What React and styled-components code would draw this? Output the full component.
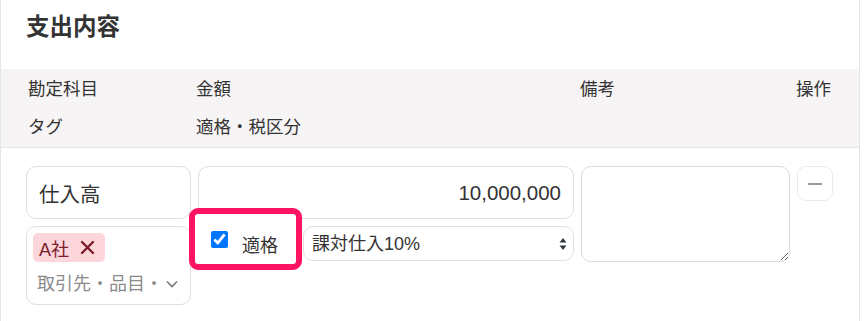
import React from 'react';
import styled, { createGlobalStyle } from 'styled-components';

const GlobalStyle = createGlobalStyle`
    body {
        margin: 0;
        background: #fff;
        color: #333;
        font-family: 'Liberation Sans', 'Noto Sans CJK JP', sans-serif;
    }
`;

const App = () => {
    return (
        <>
            <GlobalStyle />
            <Card>
                <Title>支出内容</Title>

                <HeaderBand>
                    <HeadCell>勘定科目</HeadCell>
                    <HeadCell>金額</HeadCell>
                    <HeadCell>備考</HeadCell>
                    <HeadCell>操作</HeadCell>
                    <HeadCell>タグ</HeadCell>
                    <HeadCell>適格・税区分</HeadCell>
                </HeaderBand>

                <Row>
                    <Stack>
                        <TextInput defaultValue='仕入高' />
                        <TagBox>
                            <Tag>
                                A社
                                <svg width='15' height='15' viewBox='0 0 15 15'>
                                    <path
                                        d='M2 2 L13 13 M13 2 L2 13'
                                        stroke='#7b1f2d'
                                        strokeWidth='2.4'
                                        strokeLinecap='round'
                                    />
                                </svg>
                            </Tag>
                            <Placeholder>
                                <span>取引先・品目・</span>
                                <svg width='12' height='8' viewBox='0 0 12 8'>
                                    <path
                                        d='M1 1.5 L6 6.5 L11 1.5'
                                        fill='none'
                                        stroke='#777'
                                        strokeWidth='1.6'
                                    />
                                </svg>
                            </Placeholder>
                        </TagBox>
                    </Stack>

                    <Stack>
                        <TextInput defaultValue='10,000,000' align='right' numeric />
                        <InlineRow>
                            <CheckLabel highlighted>
                                <input type='checkbox' defaultChecked />
                                <span>適格</span>
                            </CheckLabel>
                            <SelectWrap>
                                <Select defaultValue='10'>
                                    <option value='10'>課対仕入10%</option>
                                    <option value='8'>課対仕入8%</option>
                                </Select>
                                <svg width='8' height='14' viewBox='0 0 8 14'>
                                    <path d='M4 1 L7.5 5.5 H0.5 Z' fill='#343a40' />
                                    <path d='M4 13 L7.5 8.5 H0.5 Z' fill='#343a40' />
                                </svg>
                            </SelectWrap>
                        </InlineRow>
                    </Stack>

                    <Memo />

                    <MinusButton aria-label='削除'>
                        <span />
                    </MinusButton>
                </Row>
            </Card>
        </>
    );
};

export default App;

const Card = styled.div`
    width: 860px;
    min-height: 321px;
    box-sizing: border-box;
    border-left: 1px solid #e6e6e6;
    border-right: 1px solid #e6e6e6;
    background: #fff;
`;

const Title = styled.h2`
    margin: 0;
    height: 69px;
    box-sizing: border-box;
    padding: 9px 0 0 25px;
    font-family: 'Noto Sans CJK JP', sans-serif;
    font-size: 23.5px;
    font-weight: 700;
    line-height: 32px;
    color: #333;
`;

const HeaderBand = styled.div`
    display: grid;
    grid-template-columns: 168px 384px 216px 1fr;
    grid-auto-rows: 26px;
    row-gap: 12px;
    padding: 6px 0 8px 27px;
    background: #f6f4f4;
    border-bottom: 1px solid #e6e6e6;
`;

const HeadCell = styled.div`
    font-family: 'Noto Sans CJK JP', sans-serif;
    font-size: 17.5px;
    line-height: 26px;
    color: #333;

    &:nth-child(5) {
        grid-column: 1;
    }
`;

const Row = styled.div`
    display: grid;
    grid-template-columns: 165px 376px 209px 36px;
    column-gap: 7px;
    align-items: start;
    padding: 18px 0 16px 25px;
`;

const Stack = styled.div`
    display: flex;
    flex-direction: column;
    gap: 7px;
`;

const TextInput = styled.input`
    height: 53px;
    width: 100%;
    box-sizing: border-box;
    padding: 0 12px;
    border: 1px solid #e3ded7;
    border-radius: 10px;
    background: #fff;
    color: #333;
    font-family: ${props =>
        props.numeric
            ? "'Liberation Sans', sans-serif"
            : "'Noto Sans CJK JP', sans-serif"};
    font-size: ${props => (props.numeric ? '20.5px' : '20.5px')};
    text-align: ${props => props.align || 'left'};
    outline: none;
`;

const TagBox = styled.div`
    height: 79px;
    box-sizing: border-box;
    display: flex;
    flex-direction: column;
    align-items: flex-start;
    padding: 6px 12px 0 6px;
    border: 1px solid #e3ded7;
    border-radius: 10px;
`;

const Tag = styled.span`
    display: inline-flex;
    align-items: center;
    height: 29px;
    padding: 0 10px 0 6px;
    gap: 11px;
    border-radius: 5px;
    background: #fcd6db;
    color: #7b1f2d;
    font-family: 'Liberation Sans', 'Noto Sans CJK JP', sans-serif;
    font-size: 18px;
`;

const Placeholder = styled.div`
    align-self: stretch;
    display: flex;
    align-items: center;
    justify-content: space-between;
    gap: 3px;
    height: 40px;
    padding-left: 4px;
    color: #8a8a8a;
    font-family: 'Noto Sans CJK JP', sans-serif;
    font-size: 18px;
    white-space: nowrap;

    span {
        overflow: hidden;
    }

    svg {
        flex: none;
        margin-top: 3px;
    }
`;

const InlineRow = styled.div`
    display: flex;
    gap: 1px;
`;

const CheckLabel = styled.label`
    position: relative;
    isolation: isolate;
    flex: 0 0 104px;
    height: 35px;
    display: flex;
    align-items: center;
    gap: 14px;
    padding-left: 13px;
    box-sizing: border-box;
    font-family: 'Noto Sans CJK JP', sans-serif;
    font-size: 18px;
    color: #333;

    input {
        width: 17px;
        height: 17px;
        margin: 0 0 8px 0;
    }

    &::before {
        content: '';
        display: ${props => (props.highlighted ? 'block' : 'none')};
        position: absolute;
        z-index: -1;
        top: -18px;
        left: -9px;
        right: 0;
        bottom: -9px;
        border: 6px solid #ff1462;
        border-radius: 9px;
        background: #fff;
    }
`;

const SelectWrap = styled.div`
    position: relative;
    flex: 1;

    svg {
        position: absolute;
        right: 7px;
        top: 11px;
        pointer-events: none;
    }
`;

const Select = styled.select`
    appearance: none;
    width: 100%;
    height: 35px;
    padding: 0 24px 0 8px;
    border: 1px solid #e3ded7;
    border-radius: 10px;
    background: #fff;
    color: #333;
    font-family: 'Liberation Sans', 'Noto Sans CJK JP', sans-serif;
    font-size: 18px;
    outline: none;
`;

const Memo = styled.textarea`
    height: 96px;
    width: 100%;
    box-sizing: border-box;
    border: 1px solid #dcdcdc;
    border-radius: 10px;
    padding: 8px;
    font-family: 'Noto Sans CJK JP', sans-serif;
    font-size: 16px;
    outline: none;
`;

const MinusButton = styled.button`
    width: 36px;
    height: 35px;
    display: flex;
    align-items: center;
    justify-content: center;
    padding: 0;
    border: 1px solid #ebebeb;
    border-radius: 9px;
    background: #fff;

    span {
        display: block;
        width: 14px;
        height: 2px;
        background: #9a9a9a;
    }
`;
